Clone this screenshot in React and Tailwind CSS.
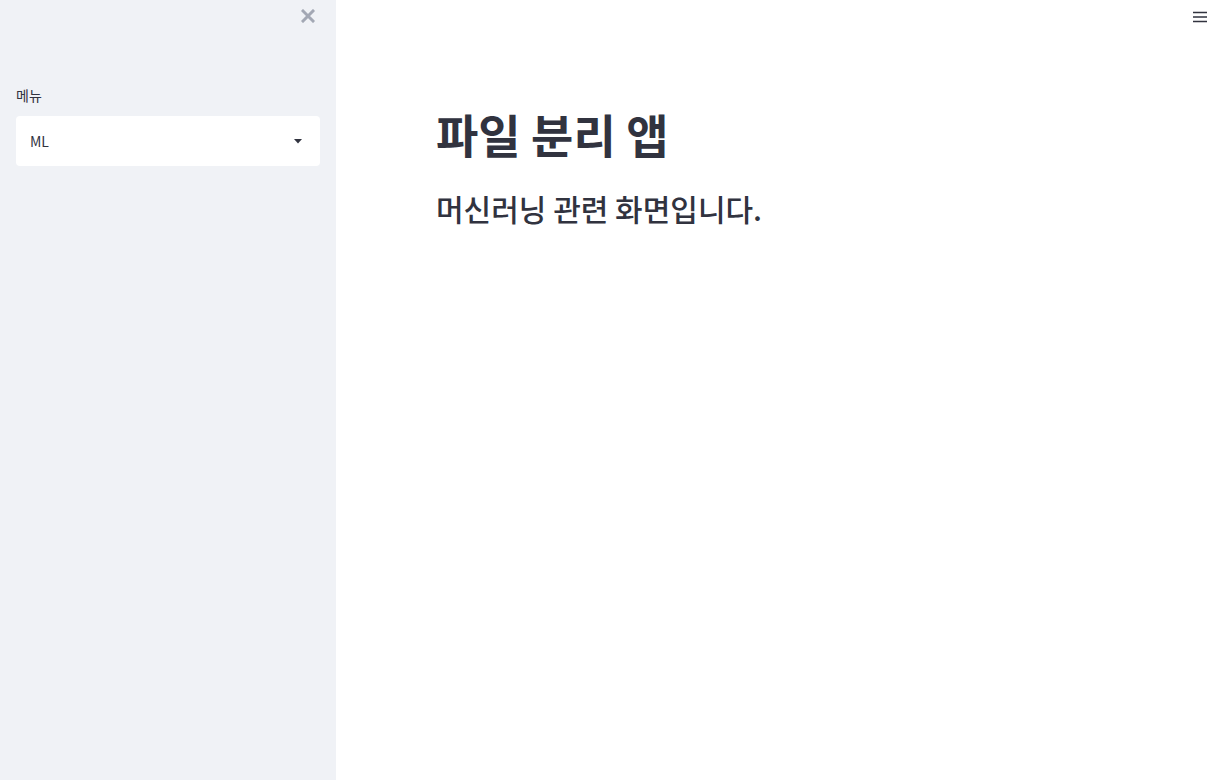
import React from 'react';

const font = { fontFamily: '"Noto Sans CJK KR", "Noto Sans", sans-serif' };

const App = () => {
  return (
    <div className="flex w-full h-[780px] bg-white text-[#31333f]" style={font}>

      {/* Sidebar */}
      <aside className="w-[336px] shrink-0 bg-[#f0f2f6] flex flex-col px-4">
        <div className="flex justify-end pt-[9px] pr-[5px]">
          <svg width="14" height="14" viewBox="0 0 14 14" className="text-[#a3a8b4]">
            <path d="M2 2 L12 12 M12 2 L2 12" stroke="currentColor" strokeWidth="3" strokeLinecap="square" />
          </svg>
        </div>

        <label className="mt-[62px] text-[14px] leading-[20px]">메뉴</label>
        <div className="mt-[11px] h-[50px] bg-white rounded-[4px] flex items-center justify-between pl-[14px] pr-[18px]">
          <span className="text-[14px]">ML</span>
          <svg width="8" height="5" viewBox="0 0 8 5">
            <path d="M0 0 L8 0 L4 4.5 Z" fill="#31333f" />
          </svg>
        </div>
      </aside>

      {/* Main */}
      <main className="flex-1 flex flex-col relative">
        <div className="absolute top-[11px] right-[2px]">
          <svg width="14" height="12" viewBox="0 0 14 12">
            <path d="M0 1.5 H14 M0 6 H14 M0 10.5 H14" stroke="#31333f" strokeWidth="1.6" />
          </svg>
        </div>

        <div className="pl-[100px] pt-[98px]">
          <h1 className="text-[46px] font-bold leading-[70px]">파일 분리 앱</h1>
          <h3 className="mt-[18px] text-[30px] font-medium leading-[44px]">머신러닝 관련 화면입니다.</h3>
        </div>
      </main>

    </div>
  );
};

export default App;
